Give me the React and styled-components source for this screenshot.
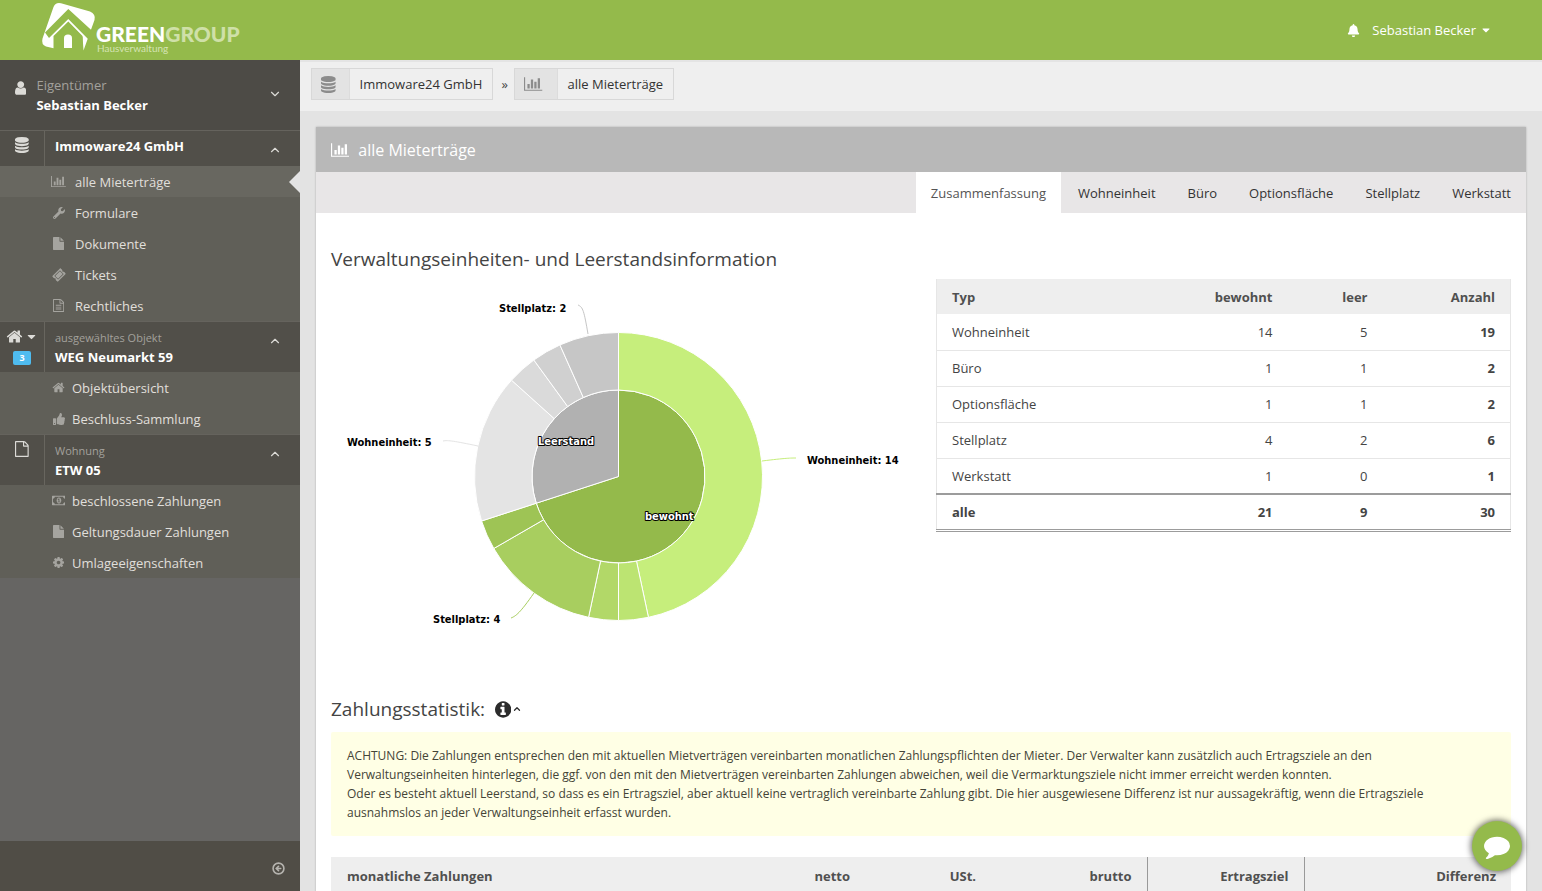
import React from 'react';
import styled, { createGlobalStyle } from 'styled-components';
import { FaWrench, FaTicketAlt, FaThumbsUp, FaBell, FaCaretDown } from 'react-icons/fa';
import { ChevronDown, ChevronUp, CircleArrowLeft } from 'lucide-react';

const GlobalStyle = createGlobalStyle`
  * {
    box-sizing: border-box;
  }

  body {
    margin: 0;
    font-family: 'Open Sans', sans-serif;
    font-size: 13px;
    line-height: 20px;
    color: #444;
    background-color: #e3e3e3;
  }

  a {
    color: inherit;
    text-decoration: none;
  }

  button {
    padding: 0;
    border: none;
    background: none;
    font: inherit;
    color: inherit;
    cursor: pointer;
  }
`;

const Page = styled.div`
  display: flex;
  flex-direction: column;
  height: 100vh;
`;

const Header = styled.header`
  display: flex;
  flex: none;
  align-items: center;
  justify-content: space-between;
  height: 60px;
  padding: 0 50px 0 40px;
  background-color: #94ba4b;
  color: #fff;
`;

const LogoLink = styled.a`
  display: block;
  height: 60px;
`;

const UserArea = styled.div`
  display: flex;
  align-items: center;
  gap: 12px;
`;

const UserButton = styled.button`
  display: flex;
  align-items: center;
  gap: 4px;
`;

const Columns = styled.div`
  display: flex;
  flex: 1;
  min-height: 0;
`;

const Sidebar = styled.aside`
  display: flex;
  flex: none;
  flex-direction: column;
  width: 300px;
  background-color: #666563;
  color: #e0dfdb;
`;

const Owner = styled.div`
  display: flex;
  height: 70px;
  padding: 15px 0 0 15px;
  background-color: #4d4b46;
  color: #dcdbd7;
`;

const OwnerIcon = styled.div`
  padding-top: 5px;
`;

const OwnerText = styled.div`
  flex: 1;
  padding-left: 10px;
`;

const Muted = styled.div`
  font-size: ${(props) => (props.$small ? '11px' : '13px')};
  line-height: ${(props) => (props.$small ? '19px' : '20px')};
  color: #a3a19c;
`;

const Strong = styled.div`
  font-weight: 700;
  color: #fff;
`;

const GroupHead = styled.div`
  display: flex;
  height: ${(props) => (props.$tall ? '51px' : '36px')};
  border-top: 1px solid #65635d;
  background-color: #514f49;
`;

const GroupIcon = styled.div`
  display: flex;
  flex-direction: column;
  align-items: center;
  width: 45px;
  padding-top: 6px;
  border-right: 1px solid #68665f;
  color: #dcdbd7;
`;

const IconLine = styled.span`
  display: flex;
  align-items: center;
  gap: 2px;
  height: 16px;
`;

const Badge = styled.span`
  width: 18px;
  height: 14px;
  margin-top: 7px;
  border-radius: 2px;
  background-color: #4fbcf0;
  color: #fff;
  font-size: 9px;
  font-weight: 700;
  line-height: 14px;
  text-align: center;
`;

const GroupTitle = styled.div`
  flex: 1;
  padding: ${(props) => (props.$single ? '5px' : '6px')} 0 0 10px;
`;

const Toggle = styled.button`
  display: flex;
  align-self: flex-start;
  margin: 12px 18px 0 0;
  color: #dcdbd7;
`;

const NavList = styled.ul`
  margin: 0;
  padding: 0;
  list-style: none;
  background-color: #605f58;
`;

const NavItem = styled.li`
  position: relative;
  background-color: ${(props) => (props.$active ? '#686760' : 'transparent')};

  &::after {
    content: '';
    display: ${(props) => (props.$active ? 'block' : 'none')};
    position: absolute;
    top: 5px;
    right: 0;
    border: 11px solid transparent;
    border-left-width: 0;
    border-right-color: #e3e3e3;
  }
`;

const NavLink = styled.a`
  display: flex;
  align-items: center;
  gap: ${(props) => (props.$wide ? '8px' : '5px')};
  height: 31px;
  padding-left: 50px;
`;

const NavIcon = styled.span`
  display: flex;
  justify-content: center;
  width: 17px;
  color: #a5a49f;
`;

const SidebarFooter = styled.div`
  display: flex;
  align-items: center;
  justify-content: flex-end;
  height: 50px;
  margin-top: auto;
  padding: 4px 15px 0;
  background-color: #504d46;
  color: #b5b3ae;
`;

const CollapseButton = styled.button`
  display: flex;
`;

const Main = styled.main`
  flex: 1;
  min-width: 0;
  overflow-y: auto;
  scrollbar-width: none;
`;

const Breadcrumb = styled.nav`
  display: flex;
  align-items: flex-start;
  height: 51px;
  padding: 6px 11px;
  border-top: 2px solid #e4e4e4;
  background-color: #efefef;
`;

const Crumb = styled.a`
  display: flex;
  height: 32px;
  border: 1px solid #d8d8d8;
  line-height: 30px;
  color: #333;
`;

const CrumbIcon = styled.span`
  display: flex;
  align-items: center;
  padding: ${(props) => (props.$wide ? '0 14px 0 9px' : '0 13px 0 9px')};
  border-right: 1px solid #dcdcdc;
  background-color: #e3e3e3;
  color: #8c8c8c;
`;

const CrumbText = styled.span`
  padding: 0 10px;
`;

const CrumbSeparator = styled.span`
  width: 21px;
  padding-left: 2px;
  text-align: center;
  line-height: 32px;
`;

const Panel = styled.section`
  margin: 16px 16px 0;
  background-color: #fff;
  box-shadow: 0 0 2px rgba(0, 0, 0, 0.25);
`;

const PanelHeader = styled.h1`
  display: flex;
  align-items: center;
  gap: 9px;
  height: 45px;
  margin: 0;
  padding: 0 15px;
  background-color: #b8b8b8;
  color: #fff;
  font-size: 16px;
  font-weight: 400;
`;

const Tabs = styled.div`
  display: flex;
  justify-content: flex-end;
  gap: 2px;
  height: 41px;
  background-color: #e8e6e7;
`;

const Tab = styled.button`
  padding: 0 15px;
  background-color: ${(props) => (props.$active ? '#fff' : 'transparent')};
  color: ${(props) => (props.$active ? '#555' : '#333')};
`;

const PanelBody = styled.div`
  padding: 30px 15px;
`;

const Heading = styled.h2`
  display: flex;
  align-items: center;
  height: 32px;
  margin: 0;
  font-size: 19px;
  font-weight: 400;
  color: #444;
`;

const InfoButton = styled.button`
  display: flex;
  align-items: center;
  margin-left: 10px;
  gap: 1px;
  color: #2c2c2c;
`;

const Overview = styled.div`
  display: grid;
  grid-template-columns: 1fr 1fr;
  gap: 30px;
  align-items: start;
  margin: 4px 0 14px;
`;

const Chart = styled.svg`
  display: block;
  width: 100%;
  height: 400px;
  overflow: visible;
  font-family: 'DejaVu Sans Condensed', 'DejaVu Sans', sans-serif;
  font-size: 11px;
  font-weight: 700;
`;

const SliceLabel = styled.text`
  fill: #fff;
  stroke: #000;
  stroke-width: 2px;
  stroke-linejoin: round;
  paint-order: stroke;
`;

const Table = styled.table`
  width: 100%;
  border-collapse: collapse;
  table-layout: fixed;
  font-size: 13px;
`;

const UnitTable = styled(Table)`
  border: 1px solid #e6e6e6;
  border-top: none;

  tfoot tr {
    border-top: 2px solid #9c9c9c;
    border-bottom: 3px double #9c9c9c;
  }
`;

const Row = styled.tr`
  height: 36px;
  border-bottom: 1px solid #e6e6e6;
`;

const Cell = styled.td`
  padding: 0 15px;
  text-align: ${(props) => (props.$left ? 'left' : 'right')};
  font-weight: ${(props) => (props.$bold ? 700 : 400)};
`;

const HeadCell = styled.th`
  height: 35px;
  padding: 0 15px;
  border-left: ${(props) => (props.$divided ? '1px solid #999' : 'none')};
  background-color: #eee;
  color: #505050;
  text-align: ${(props) => (props.$left ? 'left' : 'right')};
`;

const PaymentTable = styled(Table)`
  th {
    height: 38px;
  }

  th:first-child {
    padding-left: 16px;
  }
`;

const Notice = styled.p`
  margin: 7px 0 21px;
  padding: 14px 16px;
  border-radius: 2px;
  background-color: #ffffe5;
  color: #444437;
  font-size: 12px;
  line-height: 19px;
`;

const ChatButton = styled.button`
  display: flex;
  align-items: center;
  justify-content: center;
  position: fixed;
  right: 20px;
  bottom: 20px;
  width: 50px;
  height: 50px;
  border-radius: 50%;
  background-color: #94ba4b;
  box-shadow: 0 0 6px 1px rgba(0, 0, 0, 0.6);
  color: #fff;
`;

const glyphs = {
  chart: {
    width: 2048,
    d: 'M640 896v512h-256v-512h256zM1024 384v1024h-256v-1024h256zM2048 1536v128h-2048v-1536h128v1408h1920zM1408 640v768h-256v-768h256zM1792 256v1152h-256v-1152h256z',
  },
  database: {
    width: 1536,
    left: 128,
    d: 'M896 768q237 0 443-43t325-127v170q0 69-103 128t-280 93.500-385 34.500-385-34.500-280-93.500-103-128v-170q119 84 325 127t443 43zM896 1536q237 0 443-43t325-127v170q0 69-103 128t-280 93.500-385 34.500-385-34.500-280-93.500-103-128v-170q119 84 325 127t443 43zM896 1152q237 0 443-43t325-127v170q0 69-103 128t-280 93.500-385 34.500-385-34.500-280-93.500-103-128v-170q119 84 325 127t443 43zM896 0q208 0 385 34.500t280 93.500 103 128v128q0 69-103 128t-280 93.500-385 34.500-385-34.500-280-93.500-103-128v-128q0-69 103-128t280-93.500 385-34.500z',
  },
  user: {
    width: 1280,
    left: 256,
    d: 'M1536 1399q0 109-62.500 187t-150.500 78h-854q-88 0-150.500-78t-62.500-187q0-85 8.500-160.500t31.500-152 58.500-131 94-89 134.500-34.500q131 128 313 128t313-128q76 0 134.500 34.500t94 89 58.500 131 31.500 152 8.500 160.500zM1280 512q0 159-112.500 271.500t-271.500 112.500-271.500-112.500-112.500-271.500 112.500-271.500 271.500-112.500 271.500 112.500 112.500 271.500z',
  },
  file: {
    width: 1536,
    left: 128,
    d: 'M1152 512v-472q22 14 36 28l408 408q14 14 28 36h-472zM1024 544q0 40 28 68t68 28h544v1056q0 40-28 68t-68 28h-1344q-40 0-68-28t-28-68v-1600q0-40 28-68t68-28h800v544z',
  },
  fileOutline: {
    width: 1536,
    left: 128,
    d: 'M1596 380q28 28 48 76t20 88v1152q0 40-28 68t-68 28h-1344q-40 0-68-28t-28-68v-1600q0-40 28-68t68-28h896q40 0 88 20t76 48zM1152 136v376h376q-10-29-22-41l-313-313q-12-12-41-22zM1536 1664v-1024h-416q-40 0-68-28t-28-68v-416h-768v1536h1280z',
  },
  fileText: {
    width: 1536,
    left: 128,
    d: 'M1596 380q28 28 48 76t20 88v1152q0 40-28 68t-68 28h-1344q-40 0-68-28t-28-68v-1600q0-40 28-68t68-28h896q40 0 88 20t76 48zM1152 136v376h376q-10-29-22-41l-313-313q-12-12-41-22zM1536 1664v-1024h-416q-40 0-68-28t-28-68v-416h-768v1536h1280zM512 832q0-14 9-23t23-9h704q14 0 23 9t9 23v64q0 14-9 23t-23 9h-704q-14 0-23-9t-9-23v-64zM1248 1056q14 0 23 9t9 23v64q0 14-9 23t-23 9h-704q-14 0-23-9t-9-23v-64q0-14 9-23t23-9h704zM1248 1312q14 0 23 9t9 23v64q0 14-9 23t-23 9h-704q-14 0-23-9t-9-23v-64q0-14 9-23t23-9h704z',
  },
  home: {
    width: 1792,
    d: 'M1472 992v480q0 26-19 45t-45 19h-384v-384h-256v384h-384q-26 0-45-19t-19-45v-480q0-1 .5-3t.5-3l575-474 575 474q1 2 1 6zm223-69l-62 74q-8 9-21 11h-3q-13 0-21-7l-692-577-692 577q-12 8-24 7-13-2-21-11l-62-74q-8-10-7-23.500t11-21.500l719-599q32-26 76-26t76 26l244 204v-195q0-14 9-23t23-9h192q14 0 23 9t9 23v408l219 182q10 8 11 21.500t-7 23.500z',
  },
  money: {
    width: 1920,
    d: 'M768 1152h384v-96h-128v-448h-114l-148 137 77 80q42-37 55-57h2v288h-128v96zm512-256q0 70-21 142t-59.500 134-101.500 101-138 39-138-39-101.500-101-59.500-134-21-142 21-142 59.500-134 101.500-101 138-39 138 39 101.500 101 59.500 134 21 142zm512 256v-512q-106 0-181-75t-75-181h-1152q0 106-75 181t-181 75v512q106 0 181 75t75 181h1152q0-106 75-181t181-75zm128-832v1152q0 26-19 45t-45 19h-1792q-26 0-45-19t-19-45v-1152q0-26 19-45t45-19h1792q26 0 45 19t19 45z',
  },
  cog: {
    width: 1536,
    left: 128,
    d: 'M1152 896q0-106-75-181t-181-75-181 75-75 181 75 181 181 75 181-75 75-181zm512-109v222q0 12-8 23t-20 13l-185 28q-19 54-39 91 35 50 107 138 10 12 10 25t-9 23q-27 37-99 108t-94 71q-12 0-26-9l-138-108q-44 23-91 38-16 136-29 186-7 28-36 28h-222q-14 0-24.500-8.500t-11.500-21.500l-28-184q-49-16-90-37l-141 107q-10 9-25 9-14 0-25-11-126-114-165-168-7-10-7-23 0-12 8-23 15-21 51-66.500t54-70.500q-27-50-41-99l-183-27q-13-2-21-12.500t-8-23.500v-222q0-12 8-23t19-13l186-28q14-46 39-92-40-57-107-138-10-12-10-24 0-10 9-23 26-36 98.500-107.500t94.500-71.500q13 0 26 10l138 107q44-23 91-38 16-136 29-186 7-28 36-28h222q14 0 24.500 8.500t11.500 21.500l28 184q49 16 90 37l142-107q9-9 24-9 13 0 25 10 129 119 165 170 7 8 7 22 0 12-8 23-15 21-51 66.500t-54 70.500q26 50 41 98l183 28q13 2 21 12.500t8 23.500z',
  },
  info: {
    width: 1536,
    left: 128,
    d: 'M1152 1376v-160q0-14-9-23t-23-9h-96v-512q0-14-9-23t-23-9h-320q-14 0-23 9t-9 23v160q0 14 9 23t23 9h96v320h-96q-14 0-23 9t-9 23v160q0 14 9 23t23 9h448q14 0 23-9t9-23zM1024 480v-160q0-14-9-23t-23-9h-192q-14 0-23 9t-9 23v160q0 14 9 23t23 9h192q14 0 23-9t9-23zM1664 896q0 209-103 385.500t-279.500 279.500-385.500 103-385.500-103-279.500-279.500-103-385.500 103-385.500 279.500-279.500 385.500-103 385.500 103 279.500 279.500 103 385.500z',
  },
  comment: {
    width: 1792,
    d: 'M1792 896q0 174-120 321.500t-326 233-450 85.500q-70 0-145-8-198 175-460 242-49 14-114 22-17 2-30.500-9t-17.500-29v-1q-3-4-.5-12t2-10 4.500-9.500l6-9 7-8.500 8-9q7-8 31-34.500t34.500-38 31-39.500 32.500-51 27-59 26-76q-157-89-247.500-220t-90.500-281q0-130 71-248.500t191-204.500 286-136.500 348-50.500q244 0 450 85.500t326 233 120 321.500z',
  },
};

const Glyph = ({ name, size }) => {
  const { width, left = 0, d } = glyphs[name];
  return (
    <svg width={(size * width) / 1792} height={size} viewBox={`${left} 0 ${width} 1792`} fill="currentColor" aria-hidden="true">
      <path d={d} />
    </svg>
  );
};

const Logo = () => (
  <svg width="210" height="60" viewBox="40 0 210 60" role="img" aria-label="Greengroup Hausverwaltung">
    <path
      d="M61 3.200 L90 11.500 Q96 14 94.500 20 L83.500 50.500 L82.500 36 L68.300 21.500 L53.500 36 L53.500 48.200 L46 46.500 Q41 44.500 42.500 38.500 L53.500 7 Q55.500 2 61 3.200 Z"
      fill="#fff"
    />
    <path d="M68.300 9 L91.800 30.500 L88.500 39.500 L68.300 19 L49 38 L45 32.500 Z" fill="#94ba4b" />
    <path d="M68.300 22.500 L82.500 37 L82.500 47 L54.500 47 L54.500 37 Z" fill="#94ba4b" />
    <path d="M64 48 V38 Q64 34.500 68 34.500 Q72 34.500 72 38 V48 Z" fill="#fff" />
    <text x="96" y="42" fontFamily="Lato, sans-serif" fontSize="21" fontWeight="900" fill="#fff">
      GREEN<tspan fill="#cfe0a8">GROUP</tspan>
    </text>
    <text x="97" y="52" fontFamily="Lato, sans-serif" fontSize="10" fill="#d5e4b4">
      Hausverwaltung
    </text>
  </svg>
);

const clientLinks = [
  { label: 'alle Mieterträge', icon: <Glyph name="chart" size={13} />, active: true },
  { label: 'Formulare', icon: <FaWrench size={12} /> },
  { label: 'Dokumente', icon: <Glyph name="file" size={13} /> },
  { label: 'Tickets', icon: <FaTicketAlt size={12} transform="rotate(-45)" /> },
  { label: 'Rechtliches', icon: <Glyph name="fileText" size={13} /> },
];

const objectLinks = [
  { label: 'Objektübersicht', icon: <Glyph name="home" size={13} /> },
  { label: 'Beschluss-Sammlung', icon: <FaThumbsUp size={12} /> },
];

const flatLinks = [
  { label: 'beschlossene Zahlungen', icon: <Glyph name="money" size={13} /> },
  { label: 'Geltungsdauer Zahlungen', icon: <Glyph name="file" size={13} /> },
  { label: 'Umlageeigenschaften', icon: <Glyph name="cog" size={13} /> },
];

const Nav = ({ links, wide }) => (
  <NavList>
    {links.map((link) => (
      <NavItem key={link.label} $active={link.active}>
        <NavLink href="#" $wide={wide}>
          <NavIcon>{link.icon}</NavIcon>
          {link.label}
        </NavLink>
      </NavItem>
    ))}
  </NavList>
);

const CX = 287.5;
const CY = 197.5;
const INNER = 86.5;
const OUTER = 144;
const TOTAL = 30;

const innerSlices = [
  { value: 21, color: '#94ba4b' },
  { value: 9, color: '#b1b1b1' },
];

const outerSlices = [
  { value: 14, color: '#c6ee7c' },
  { value: 1, color: '#bce472' },
  { value: 1, color: '#b2d868' },
  { value: 4, color: '#a8ce5f' },
  { value: 1, color: '#9ec455' },
  { value: 5, color: '#e4e4e4' },
  { value: 1, color: '#dadada' },
  { value: 1, color: '#d0d0d0' },
  { value: 2, color: '#c6c6c6' },
];

const point = (value, radius) => {
  const angle = (value / TOTAL) * 2 * Math.PI;
  return `${CX + radius * Math.sin(angle)} ${CY - radius * Math.cos(angle)}`;
};

const slicePath = (start, end, r0, r1) => {
  const large = end - start > TOTAL / 2 ? 1 : 0;
  return `M${point(start, r1)} A${r1} ${r1} 0 ${large} 1 ${point(end, r1)} L${point(end, r0)} A${r0} ${r0} 0 ${large} 0 ${point(start, r0)} Z`;
};

const Ring = ({ slices, r0, r1 }) => {
  let start = 0;
  return slices.map((slice, i) => {
    const d = slicePath(start, start + slice.value, r0, r1);
    start += slice.value;
    return <path key={i} d={d} fill={slice.color} stroke="#fff" strokeWidth="1" strokeLinejoin="round" />;
  });
};

const UnitChart = () => (
  <Chart viewBox="0 0 575 400">
    <Ring slices={innerSlices} r0={0} r1={INNER} />
    <Ring slices={outerSlices} r0={INNER} r1={OUTER} />
    <g fill="none" strokeWidth="1">
      <path d="M247 26 C252 28 253 32 257 55" stroke="#c6c6c6" />
      <path d="M112 162 C117 161 123 162 147 167" stroke="#e4e4e4" />
      <path d="M180 339 C185 337 189 334 203 314" stroke="#a8ce5f" />
      <path d="M465 179 C460 179 455 179 431 182" stroke="#c6ee7c" />
    </g>
    <text x="168" y="33">Stellplatz: 2</text>
    <text x="16" y="167">Wohneinheit: 5</text>
    <text x="102" y="344">Stellplatz: 4</text>
    <text x="476" y="185">Wohneinheit: 14</text>
    <SliceLabel x="207" y="166">Leerstand</SliceLabel>
    <SliceLabel x="314" y="241">bewohnt</SliceLabel>
  </Chart>
);

const units = [
  { type: 'Wohneinheit', occupied: 14, empty: 5, total: 19 },
  { type: 'Büro', occupied: 1, empty: 1, total: 2 },
  { type: 'Optionsfläche', occupied: 1, empty: 1, total: 2 },
  { type: 'Stellplatz', occupied: 4, empty: 2, total: 6 },
  { type: 'Werkstatt', occupied: 1, empty: 0, total: 1 },
];

const tabs = ['Zusammenfassung', 'Wohneinheit', 'Büro', 'Optionsfläche', 'Stellplatz', 'Werkstatt'];

const App = () => {
  return (
    <Page>
      <GlobalStyle />
      <Header>
        <LogoLink href="#">
          <Logo />
        </LogoLink>
        <UserArea>
          <FaBell size={13} />
          <UserButton>
            Sebastian Becker
            <FaCaretDown size={12} />
          </UserButton>
        </UserArea>
      </Header>
      <Columns>
        <Sidebar>
          <Owner>
            <OwnerIcon>
              <Glyph name="user" size={16} />
            </OwnerIcon>
            <OwnerText>
              <Muted>Eigentümer</Muted>
              <Strong>Sebastian Becker</Strong>
            </OwnerText>
            <Toggle aria-label="Eigentümer">
              <ChevronDown size={14} />
            </Toggle>
          </Owner>
          <GroupHead>
            <GroupIcon>
              <IconLine>
                <Glyph name="database" size={16} />
              </IconLine>
            </GroupIcon>
            <GroupTitle $single>
              <Strong>Immoware24 GmbH</Strong>
            </GroupTitle>
            <Toggle aria-label="Immoware24 GmbH">
              <ChevronUp size={14} />
            </Toggle>
          </GroupHead>
          <Nav links={clientLinks} wide />
          <GroupHead $tall>
            <GroupIcon>
              <IconLine>
                <Glyph name="home" size={17} />
                <FaCaretDown size={13} />
              </IconLine>
              <Badge>3</Badge>
            </GroupIcon>
            <GroupTitle>
              <Muted $small>ausgewähltes Objekt</Muted>
              <Strong>WEG Neumarkt 59</Strong>
            </GroupTitle>
            <Toggle aria-label="WEG Neumarkt 59">
              <ChevronUp size={14} />
            </Toggle>
          </GroupHead>
          <Nav links={objectLinks} />
          <GroupHead $tall>
            <GroupIcon>
              <IconLine>
                <Glyph name="fileOutline" size={16} />
              </IconLine>
            </GroupIcon>
            <GroupTitle>
              <Muted $small>Wohnung</Muted>
              <Strong>ETW 05</Strong>
            </GroupTitle>
            <Toggle aria-label="ETW 05">
              <ChevronUp size={14} />
            </Toggle>
          </GroupHead>
          <Nav links={flatLinks} />
          <SidebarFooter>
            <CollapseButton aria-label="Menü einklappen">
              <CircleArrowLeft size={13} strokeWidth={3} />
            </CollapseButton>
          </SidebarFooter>
        </Sidebar>
        <Main>
          <Breadcrumb>
            <Crumb href="#">
              <CrumbIcon>
                <Glyph name="database" size={17} />
              </CrumbIcon>
              <CrumbText>Immoware24 GmbH</CrumbText>
            </Crumb>
            <CrumbSeparator>»</CrumbSeparator>
            <Crumb href="#">
              <CrumbIcon $wide>
                <Glyph name="chart" size={16} />
              </CrumbIcon>
              <CrumbText>alle Mieterträge</CrumbText>
            </Crumb>
          </Breadcrumb>
          <Panel>
            <PanelHeader>
              <Glyph name="chart" size={16} />
              alle Mieterträge
            </PanelHeader>
            <Tabs role="tablist">
              {tabs.map((tab, i) => (
                <Tab key={tab} role="tab" aria-selected={i === 0} $active={i === 0}>
                  {tab}
                </Tab>
              ))}
            </Tabs>
            <PanelBody>
              <Heading>Verwaltungseinheiten- und Leerstandsinformation</Heading>
              <Overview>
                <UnitChart />
                <UnitTable>
                  <colgroup>
                    <col />
                    <col width="110" />
                    <col width="95" />
                    <col width="128" />
                  </colgroup>
                  <thead>
                    <tr>
                      <HeadCell $left>Typ</HeadCell>
                      <HeadCell>bewohnt</HeadCell>
                      <HeadCell>leer</HeadCell>
                      <HeadCell>Anzahl</HeadCell>
                    </tr>
                  </thead>
                  <tbody>
                    {units.map((unit) => (
                      <Row key={unit.type}>
                        <Cell $left>{unit.type}</Cell>
                        <Cell>{unit.occupied}</Cell>
                        <Cell>{unit.empty}</Cell>
                        <Cell $bold>{unit.total}</Cell>
                      </Row>
                    ))}
                  </tbody>
                  <tfoot>
                    <Row>
                      <Cell $left $bold>alle</Cell>
                      <Cell $bold>21</Cell>
                      <Cell $bold>9</Cell>
                      <Cell $bold>30</Cell>
                    </Row>
                  </tfoot>
                </UnitTable>
              </Overview>
              <Heading>
                Zahlungsstatistik:
                <InfoButton aria-label="Hinweis zur Zahlungsstatistik">
                  <Glyph name="info" size={19} />
                  <ChevronUp size={10} strokeWidth={3} />
                </InfoButton>
              </Heading>
              <Notice>
                ACHTUNG: Die Zahlungen entsprechen den mit aktuellen Mietverträgen vereinbarten monatlichen Zahlungspflichten der Mieter. Der Verwalter kann zusätzlich auch Ertragsziele an den Verwaltungseinheiten hinterlegen, die ggf. von den mit den Mietverträgen vereinbarten Zahlungen abweichen, weil die Vermarktungsziele nicht immer erreicht werden konnten.
                <br />
                Oder es besteht aktuell Leerstand, so dass es ein Ertragsziel, aber aktuell keine vertraglich vereinbarte Zahlung gibt. Die hier ausgewiesene Differenz ist nur aussagekräftig, wenn die Ertragsziele ausnahmslos an jeder Verwaltungseinheit erfasst wurden.
              </Notice>
              <PaymentTable>
                <colgroup>
                  <col />
                  <col width="220" />
                  <col width="126" />
                  <col width="156" />
                  <col width="157" />
                  <col width="207" />
                </colgroup>
                <thead>
                  <tr>
                    <HeadCell $left>monatliche Zahlungen</HeadCell>
                    <HeadCell>netto</HeadCell>
                    <HeadCell>USt.</HeadCell>
                    <HeadCell>brutto</HeadCell>
                    <HeadCell $divided>Ertragsziel</HeadCell>
                    <HeadCell $divided>Differenz</HeadCell>
                  </tr>
                </thead>
              </PaymentTable>
            </PanelBody>
          </Panel>
        </Main>
      </Columns>
      <ChatButton aria-label="Chat">
        <Glyph name="comment" size={26} />
      </ChatButton>
    </Page>
  );
};

export default App;
